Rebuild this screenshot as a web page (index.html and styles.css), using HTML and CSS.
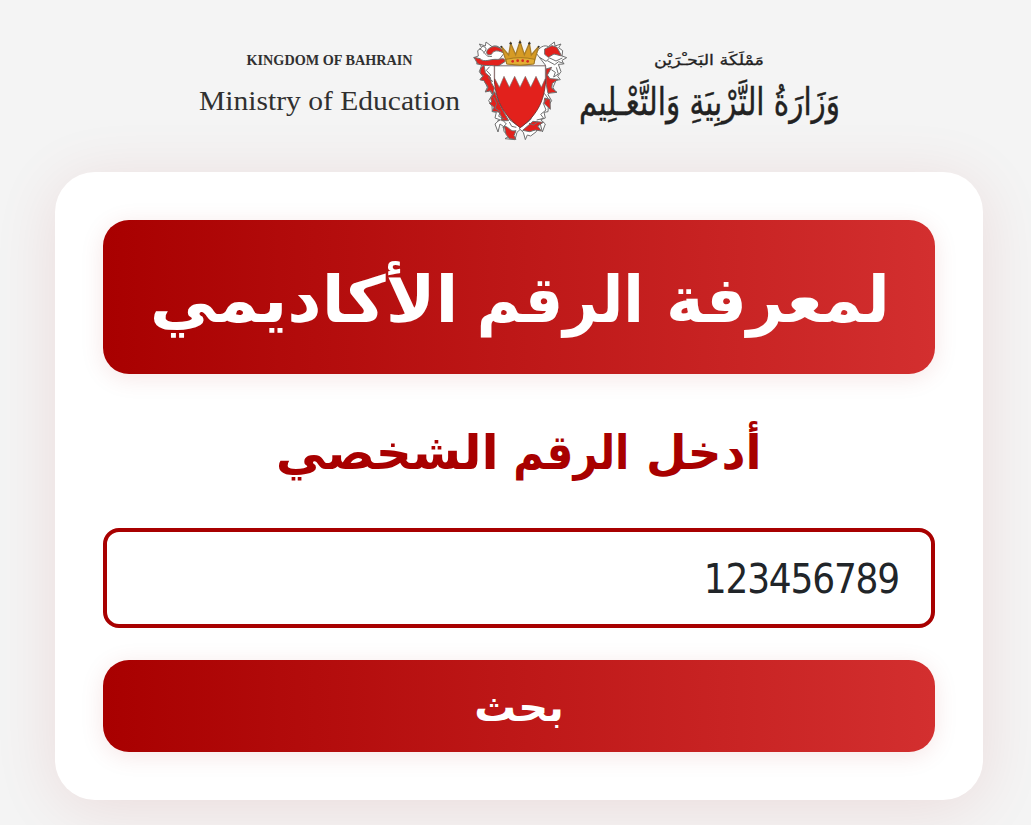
FILE: index.html
```html
<!DOCTYPE html>
<html lang="ar" dir="rtl">
<head>
<meta charset="utf-8">
<title>لمعرفة الرقم الأكاديمي</title>
<link rel="stylesheet" href="styles.css">
</head>
<body>
<header class="brand" dir="ltr">
  <svg class="brand-en" viewBox="0 0 270 120">
    <text x="51.5" y="35" font-size="14" font-weight="bold" textLength="166" lengthAdjust="spacingAndGlyphs">KINGDOM OF BAHRAIN</text>
    <text x="4" y="80" font-size="27.5" textLength="261" lengthAdjust="spacingAndGlyphs">Ministry of Education</text>
  </svg>
  <svg class="crest" viewBox="0 0 360 360">
    <g stroke="#707070" stroke-width="3" stroke-linejoin="round">
      <g>
        <path fill="#fff" d="M132 70 C125 52 108 43 96 50 L78 36 L76 48 L58 42 L65 53 L53 62 L55 78 L41 83 L55 91 L50 102 L66 103 L58 125 L68 139 L60 149 L73 151 L82 172 L76 185 L90 182 L97 194 L86 212 L96 228 L97 245 L109 247 L105 264 L119 269 L105 282 L114 306 L120 282 L130 289 L132 305 L149 318 L135 326 L165 329 L171 307 L184 295 L150 270 L120 210 L104 157 L105 105Z"/>
        <path fill="#e2211c" d="M82 60 C100 40 126 52 132 70 C116 60 101 60 96 71 C89 78 75 75 82 60Z M42 82 L60 86 C72 98 90 88 105 88 C124 90 132 80 136 94 L112 110 C90 102 70 112 52 100Z M72 105 C56 117 58 132 70 137 L60 149 L72 152 C74 160 84 165 84 174 L76 186 L92 182 L99 194 L103 174 L94 158 L91 142 L76 128Z M104 185 L92 205 L95 216 L88 220 L102 232 L96 244 L116 246 L125 261 L125 272 L146 272 L126 236 L112 207Z M133 288 C150 292 149 306 168 302 L162 317 L168 328 L148 326 L138 313Z"/>
        <path fill="none" d="M58 56 C80 66 73 83 96 79 M65 49 C85 50 78 63 70 69 M89 110 L79 121 L92 135 L85 144 L99 155 M101 202 L110 220 L105 235 L121 245 L116 259 L134 267 M111 274 L126 268 L139 282 L128 292 M148 276 L155 289 L169 292"/>
      </g>
      <g transform="translate(361 0) scale(-1 1)">
        <path fill="#fff" d="M132 70 C125 52 108 43 96 50 L78 36 L76 48 L58 42 L65 53 L53 62 L55 78 L41 83 L55 91 L50 102 L66 103 L58 125 L68 139 L60 149 L73 151 L82 172 L76 185 L90 182 L97 194 L86 212 L96 228 L97 245 L109 247 L105 264 L119 269 L105 282 L114 306 L120 282 L130 289 L132 305 L149 318 L159 315 L165 329 L171 307 L184 295 L150 270 L120 210 L104 157 L105 105Z"/>
        <path fill="#e2211c" d="M107 57 L85 47 L70 52 L56 78 L79 72 L96 82 L107 73Z M86 112 L99 135 L91 146 L66 148 L84 160 L86 174 L70 187 L97 190 L103 160 L103 117Z M91 208 L107 204 L109 220 L90 238Z M111 277 L128 288 L117 303 L135 300 L152 305 L173 301 L142 274Z"/>
        <path fill="none" d="M54 84 L73 93 L92 84 L103 94 L122 82 M48 101 L65 95 L77 104 L99 92 M72 112 L66 132 L80 141 L75 127 L87 119 M108 190 L97 205 L111 220 L103 240 L119 253 L110 265 L131 270 M128 276 L141 285 L154 280"/>
      </g>
    </g>
    <path d="M103 108 H257 V140 C257 204 235 254 181 293 C129 256 103 204 103 140Z" fill="#e2211c" stroke="#6b3030" stroke-width="2.5"/>
    <path d="M104 108 H256 V145 L244 172 L228 139 L212 172 L196 139 L180 172 L164 139 L148 172 L132 139 L118 172 L104 145Z" fill="#fff" stroke="#777" stroke-width="2"/>
    <path d="M141 101 L124 49 L146 75 L152 40 L167 74 L180 34 L193 74 L208 40 L214 75 L236 49 L221 101 Q181 108 141 101Z" fill="#d69b25" stroke="#a87c28" stroke-width="4"/>
    <path d="M138 88 Q181 78 224 88 L222 102 Q181 109 140 102Z" fill="#e3ad34" stroke="#8a641a" stroke-width="2"/>
    <g fill="#333"><circle cx="124" cy="50" r="3"/><circle cx="152" cy="40" r="3.5"/><circle cx="180" cy="37" r="3.5"/><circle cx="208" cy="40" r="3.5"/><circle cx="236" cy="50" r="3"/></g>
    <g fill="#d52a20"><circle cx="158" cy="94" r="4"/><circle cx="173" cy="92" r="4"/><circle cx="188" cy="92" r="4"/><circle cx="203" cy="94" r="4"/></g>
  </svg>
  <svg class="brand-ar" viewBox="0 0 275 120" direction="rtl">
    <text class="kingdom" x="189" y="35" font-size="15" textLength="110" lengthAdjust="spacingAndGlyphs">مَمْلَكَة البَحـْرَيْن</text>
    <text class="ministry" x="265" y="85" font-size="38" textLength="261" lengthAdjust="spacingAndGlyphs">وَزَارَةُ التَّرْبِيَةِ وَالتَّعْـلِيم</text>
  </svg>
</header>
<main class="card">
  <h1 class="title"><span class="title-text"><span class="word">لمعرفة</span> <span class="word title-second">الرقم</span> <span class="word title-third">الأكاديمي</span></span></h1>
  <label class="prompt" for="pid"><span class="prompt-text"><span class="word prompt-first">أدخل</span> <span class="word prompt-second">الرقم</span> <span class="word prompt-third">الشخصي</span></span></label>
  <input class="field" id="pid" type="text" value="123456789">
  <button class="search" type="button"><span class="search-text">بحث</span></button>
</main>
</body>
</html>
```

FILE: styles.css
```css
* { box-sizing: border-box; }
body {
  margin: 0;
  height: 825px;
  overflow: hidden;
  padding: 30px 48px 0 55px;
  background: #f4f4f4;
  font-family: "DejaVu Sans", sans-serif;
}
.brand {
  display: flex;
  height: 120px;
  margin: 0 0 22px 140px;
}
.brand svg { display: block; flex: none; height: 120px; }
.brand-en { width: 270px; fill: #303030; font-family: "Liberation Serif", serif; }
.crest { width: 120px; margin: 0 -5px; }
.brand-ar { width: 275px; overflow: visible; fill: #222; font-family: "DejaVu Sans", sans-serif; }
.kingdom { stroke: #222; stroke-width: .3px; }
.ministry { stroke: #222; stroke-width: .4px; }
.card {
  display: flex;
  flex-direction: column;
  height: 628px;
  padding: 48px;
  border-radius: 40px;
  background: #fff;
  box-shadow: 0 8px 64px rgba(168, 0, 0, .1);
}
.title, .prompt, .search {
  display: flex;
  align-items: center;
  justify-content: center;
  margin: 0;
  font-weight: 700;
  white-space: nowrap;
}
.title, .search {
  border: 0;
  border-radius: 26px;
  color: #fff;
  background: linear-gradient(90deg, #a80000, #d32f2f);
  box-shadow: 0 4px 24px rgba(168, 0, 0, .1);
}
.title { height: 154px; padding-top: 6px; font-size: 64px; }
.prompt { height: 154px; padding-top: 2px; color: #a80000; font-size: 48px; }
.word { display: inline-block; transform-origin: right center; }
.title-second { transform: scaleX(.94); }
.title-third { transform: translateX(15px) scaleX(1.045); }
.prompt-first { transform: translateX(-7px) scaleX(.975); }
.prompt-second { transform: translateX(-4px) scaleX(.87); }
.prompt-third { transform: translateX(16px) scaleX(1.043); }
.field {
  width: 100%;
  height: 100px;
  padding: 1px 32px 0;
  border: 4px solid #a80000;
  border-radius: 16px;
  outline: 0;
  background: #fff;
  color: #212529;
  font: 40px "DejaVu Sans Condensed", "DejaVu Sans", sans-serif;
  font-stretch: condensed;
  letter-spacing: -1.2px;
}
.search {
  height: 92px;
  margin-top: 32px;
  padding-top: 3px;
  font-family: inherit;
  font-size: 40px;
}
.search-text { transform: scaleX(1.04); }
```
